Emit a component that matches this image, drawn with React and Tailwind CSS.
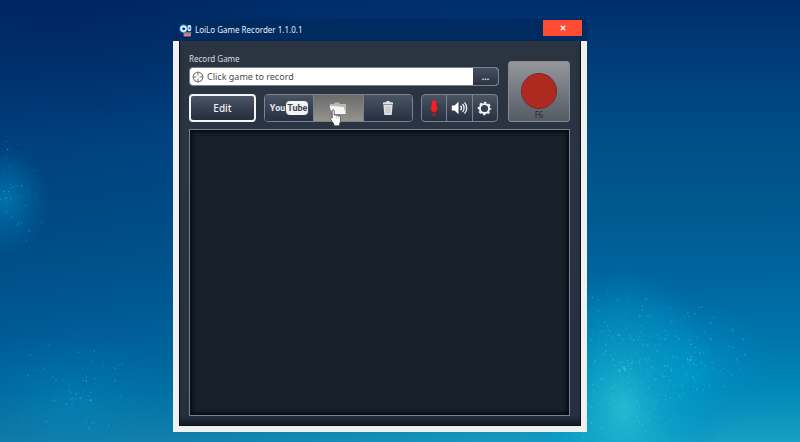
import React from "react";

function makeSparks(seed, count, cx, cy, rx, ry) {
  let s = seed;
  const next = () => {
    s = (s * 16807) % 2147483647;
    return s / 2147483647;
  };
  return Array.from({ length: count }, () => {
    const angle = next() * Math.PI * 2;
    const r = next();
    return {
      x: cx + Math.cos(angle) * r * rx,
      y: cy + Math.sin(angle) * r * ry,
      o: 0.1 + next() * 0.35,
    };
  });
}

const sparks = [
  ...makeSparks(71, 260, 625, 370, 65, 90),
  ...makeSparks(19, 130, 690, 360, 60, 55),
  ...makeSparks(43, 50, 12, 195, 38, 60),
  ...makeSparks(97, 70, 75, 395, 60, 60),
];

function Wallpaper() {
  return (
    <svg
      className="absolute inset-0 h-full w-full"
      viewBox="0 0 800 442"
      preserveAspectRatio="none"
      aria-hidden="true"
    >
      <defs>
        <linearGradient id="sky" x1="0" y1="0" x2="0" y2="1">
          <stop offset="0" stopColor="#002e6c" />
          <stop offset="0.14" stopColor="#003d78" />
          <stop offset="0.3" stopColor="#004d88" />
          <stop offset="0.5" stopColor="#005a92" />
          <stop offset="0.65" stopColor="#0068a0" />
          <stop offset="0.76" stopColor="#0074ac" />
          <stop offset="0.88" stopColor="#0088b8" />
          <stop offset="1" stopColor="#18a0c4" />
        </linearGradient>
        <linearGradient id="dusk" x1="0" y1="0" x2="1" y2="0">
          <stop offset="0" stopColor="#001f60" stopOpacity="0.3" />
          <stop offset="0.22" stopColor="#001f60" stopOpacity="0.24" />
          <stop offset="0.75" stopColor="#001f60" stopOpacity="0" />
        </linearGradient>
        <radialGradient id="glow">
          <stop offset="0" stopColor="#2cc8d6" stopOpacity="0.8" />
          <stop offset="0.4" stopColor="#10abcc" stopOpacity="0.6" />
          <stop offset="0.75" stopColor="#009acc" stopOpacity="0.35" />
          <stop offset="1" stopColor="#0088c4" stopOpacity="0" />
        </radialGradient>
        <radialGradient id="haze">
          <stop offset="0" stopColor="#00a0d0" stopOpacity="0.5" />
          <stop offset="1" stopColor="#0088c4" stopOpacity="0" />
        </radialGradient>
        <radialGradient id="shade">
          <stop offset="0" stopColor="#001c58" stopOpacity="0.4" />
          <stop offset="1" stopColor="#001c58" stopOpacity="0" />
        </radialGradient>
      </defs>
      <rect width="800" height="442" fill="url(#sky)" />
      <rect width="800" height="442" fill="url(#dusk)" />
      <ellipse cx="60" cy="0" rx="260" ry="150" fill="url(#shade)" />
      <ellipse cx="5" cy="200" rx="45" ry="55" fill="url(#haze)" />
      <ellipse cx="70" cy="405" rx="110" ry="80" fill="url(#haze)" opacity="0.5" />
      <ellipse cx="625" cy="405" rx="100" ry="135" fill="url(#glow)" />
      <ellipse cx="690" cy="370" rx="85" ry="75" fill="url(#haze)" />
      {sparks.map((p, i) => (
        <circle key={i} cx={p.x} cy={p.y} r="0.7" fill="#6fe0ee" opacity={p.o} />
      ))}
    </svg>
  );
}

function AppLogo() {
  return (
    <svg width="13" height="13" viewBox="0 0 13 13" aria-hidden="true">
      <circle cx="4.5" cy="4.5" r="4.3" fill="#1d80cf" />
      <circle cx="4.5" cy="4.7" r="3.2" fill="#f4fbff" />
      <circle cx="4.7" cy="4.7" r="1.5" fill="#06396f" />
      <rect x="8.6" y="1" width="3.6" height="6.4" rx="1.8" fill="#e4f4ff" />
      <rect x="9.6" y="3" width="1.8" height="2.6" rx="0.9" fill="#1769ae" />
      <path d="M3.5 8.6h8.7v1H5z" fill="#c9c3d0" />
      <rect x="4.5" y="9.6" width="7.5" height="2.8" rx="1.2" fill="#d8817c" />
    </svg>
  );
}

function TargetIcon() {
  return (
    <svg width="12" height="12" viewBox="0 0 12 12" fill="none" stroke="#777" aria-hidden="true">
      <circle cx="6" cy="6" r="4.8" strokeWidth="1.1" />
      <path d="M6 .6v4M6 7.4v4M.6 6h4M7.4 6h4" strokeWidth="1.1" />
    </svg>
  );
}

function YouTubeLogo() {
  return (
    <span className="flex items-center gap-px font-['Roboto',sans-serif] text-[9px] leading-[14px] font-bold text-[#e8eaed]">
      <span>You</span>
      <span className="rounded-[4px] bg-[#f3f4f6] px-px text-[#3d4655]">Tube</span>
    </span>
  );
}

function FolderIcon() {
  return (
    <svg width="20" height="16" viewBox="0 0 20 16" aria-hidden="true">
      <path d="M2 10V4h4l1.200-1.500h3.800L12 4h6v8z" fill="#b9b9b6" />
      <path d="M1.500 5.800L15.500 7 18 14H4.500z" fill="#f7f7f5" />
    </svg>
  );
}

function TrashIcon() {
  return (
    <svg width="12" height="16" viewBox="0 0 12 16" aria-hidden="true">
      <path d="M4.400 1h3.200v1.100L11 2.600v1.900H1V2.600l3.400-.5z" fill="#dfe1e4" />
      <path d="M1.400 4.900h9.200L9.700 15H2.300z" fill="#dfe1e4" />
      <path d="M4 6.500l.3 7M6 6.500v7M8 6.500l-.3 7" stroke="#b2b6bc" strokeWidth="0.8" />
    </svg>
  );
}

function MicIcon() {
  return (
    <svg width="10" height="18" viewBox="0 0 10 18" aria-hidden="true">
      <rect x="2.600" y="1.500" width="4.800" height="11.500" rx="2.400" fill="#ff1c1c" />
      <path d="M1.600 7.500v1.500c0 5 6.800 5 6.800 0V7.500" fill="#ff1c1c" fillOpacity="0.75" />
      <path d="M5 12.500v3M2.800 16h4.400" stroke="#c41d25" strokeWidth="1.200" />
    </svg>
  );
}

function SpeakerIcon() {
  return (
    <svg width="17" height="14" viewBox="0 0 17 14" aria-hidden="true">
      <path d="M.8 4.400h2.700L7.500 .8v12.400L3.500 9.600H.8z" fill="#fff" />
      <path
        d="M9.500 4.800a3.200 3.200 0 0 1 0 4.400M11.500 3a5.800 5.800 0 0 1 0 8M13.500 1.400a8.300 8.300 0 0 1 0 11.200"
        fill="none"
        stroke="#f2f4f7"
        strokeWidth="1.300"
      />
    </svg>
  );
}

function GearIcon() {
  return (
    <svg width="15" height="15" viewBox="0 0 15 15" fill="none" stroke="#f2f3f5" aria-hidden="true">
      <circle cx="7.500" cy="7.500" r="4.600" strokeWidth="2" />
      <circle cx="7.500" cy="7.500" r="6" strokeWidth="1.600" strokeDasharray="2.400 2.312" strokeDashoffset="1.200" />
    </svg>
  );
}

function HandCursor() {
  return (
    <svg
      className="pointer-events-none absolute top-3.5 left-4"
      width="12"
      height="18"
      viewBox="0 0 12 18"
      aria-hidden="true"
    >
      <path
        d="M2.200 1.800c0-1.500 2-1.500 2 0v4.400c.4-.6 1.800-.5 2.100.4.600-.5 1.900-.3 2.200.6.700-.5 2-.1 2 1v3.600c0 1.200-.7 2.300-1 3.200v1.800H4v-1.600C3.200 13.800 1.600 12 .6 10.200c-.5-1 .7-1.800 1.600-1z"
        fill="#fff"
        stroke="#42464d"
        strokeWidth="0.8"
      />
      <path d="M6.300 7v2.500M8.400 7.500v2" stroke="#888c92" strokeWidth="0.5" />
    </svg>
  );
}

export default function App() {
  return (
    <main className="relative min-h-screen overflow-hidden bg-[#004d8c] font-['Noto_Sans','Open_Sans',sans-serif] text-white">
      <Wallpaper />
      <section
        aria-label="LoiLo Game Recorder"
        className="absolute top-[19px] left-[173px] flex w-[414px] max-w-full flex-col"
      >
        <header className="flex h-[22px] items-center gap-[3px] bg-[#002b60] pr-[5px] pl-1.5">
          <AppLogo />
          <h1 className="flex-1 text-[8px] leading-3 text-[#e6eef8]">LoiLo Game Recorder 1.1.0.1</h1>
          <button
            type="button"
            aria-label="Close"
            className="mt-px flex h-4 w-[39px] items-center justify-center self-start bg-[#ff4b32]"
          >
            <svg width="6" height="6" viewBox="0 0 6 6" stroke="#fff" strokeWidth="1.3" aria-hidden="true">
              <path d="M.8.8l4.400 4.400M5.200.8L.8 5.200" />
            </svg>
          </button>
        </header>

        <div className="border-x-[6px] border-b-[6px] border-[#f0f0f0]">
          <div className="flex flex-col gap-[7px] border border-t-0 border-[#0c1119] bg-linear-to-b from-[#2b3542] via-[#283241] to-[#263040] pt-3 pr-2.5 pb-[9px] pl-[9px] shadow-[inset_0_-8px_6px_-4px_#111923]">
            <div className="flex gap-[9px]">
              <div className="flex flex-1 flex-col">
                <label htmlFor="game" className="h-[14px] text-[8px] leading-3 text-[#d9dde2]">
                  Record Game
                </label>
                <div className="flex h-[19px] overflow-hidden rounded-[4px] border border-[#7b828c] bg-white">
                  <span className="flex items-center pl-[2px]">
                    <TargetIcon />
                  </span>
                  <input
                    id="game"
                    type="text"
                    readOnly
                    defaultValue="Click game to record"
                    className="min-w-0 flex-1 bg-transparent px-[3px] text-[9px] leading-4 text-[#4c4c4c] outline-none"
                  />
                  <button
                    type="button"
                    aria-label="Browse"
                    className="w-[25px] bg-linear-to-b from-[#465060] to-[#2a3443] text-[9px] leading-4 font-bold text-[#e2e5e9]"
                  >
                    ...
                  </button>
                </div>
                <div className="mt-2 flex gap-2">
                  <button
                    type="button"
                    className="h-7 flex-1 rounded-[4px] border-2 border-[#f2f4f6] bg-linear-to-b from-[#4d5665] to-[#232d3d] text-[10px] leading-4 font-medium text-[#eef0f3]"
                  >
                    Edit
                  </button>
                  <div className="flex h-7 w-[149px] divide-x divide-[#7a828d] rounded-[4px] border border-[#7a828d]">
                    <button
                      type="button"
                      aria-label="YouTube"
                      className="flex flex-1 items-center justify-center rounded-l-[3px] bg-linear-to-b from-[#4b5463] to-[#263040]"
                    >
                      <YouTubeLogo />
                    </button>
                    <button
                      type="button"
                      aria-label="Open folder"
                      className="relative flex flex-1 items-center justify-center bg-linear-to-b from-[#6a6c6d] to-[#96938c]"
                    >
                      <FolderIcon />
                      <HandCursor />
                    </button>
                    <button
                      type="button"
                      aria-label="Delete"
                      className="flex flex-1 items-center justify-center rounded-r-[3px] bg-linear-to-b from-[#4b5463] to-[#263040]"
                    >
                      <TrashIcon />
                    </button>
                  </div>
                  <div className="mr-px flex h-7 w-[77px] divide-x divide-[#7a828d] overflow-hidden rounded-[4px] border border-[#7a828d] bg-linear-to-b from-[#4b5463] to-[#263040]">
                    <button type="button" aria-label="Microphone" className="flex flex-1 items-center justify-center">
                      <MicIcon />
                    </button>
                    <button type="button" aria-label="Sound" className="flex flex-1 items-center justify-center">
                      <SpeakerIcon />
                    </button>
                    <button type="button" aria-label="Settings" className="flex flex-1 items-center justify-center">
                      <GearIcon />
                    </button>
                  </div>
                </div>
              </div>
              <button
                type="button"
                aria-label="Record, F6"
                className="mt-2 flex h-[61px] w-[62px] flex-col items-center justify-end rounded-[3px] border border-[#878b91] bg-linear-to-b from-[#94979c] to-[#555b64]"
              >
                <span className="h-9 w-9 rounded-full border border-[#84241f] bg-[#ac2a20]" />
                <span className="text-[8px] leading-3 text-[#272c33]">F6</span>
              </button>
            </div>
            <div
              role="list"
              aria-label="Recordings"
              className="h-[287px] border border-[#7b818a] bg-[#17202b] shadow-[inset_0_0_4px_2px_#05080d]"
            />
          </div>
        </div>
      </section>
    </main>
  );
}
